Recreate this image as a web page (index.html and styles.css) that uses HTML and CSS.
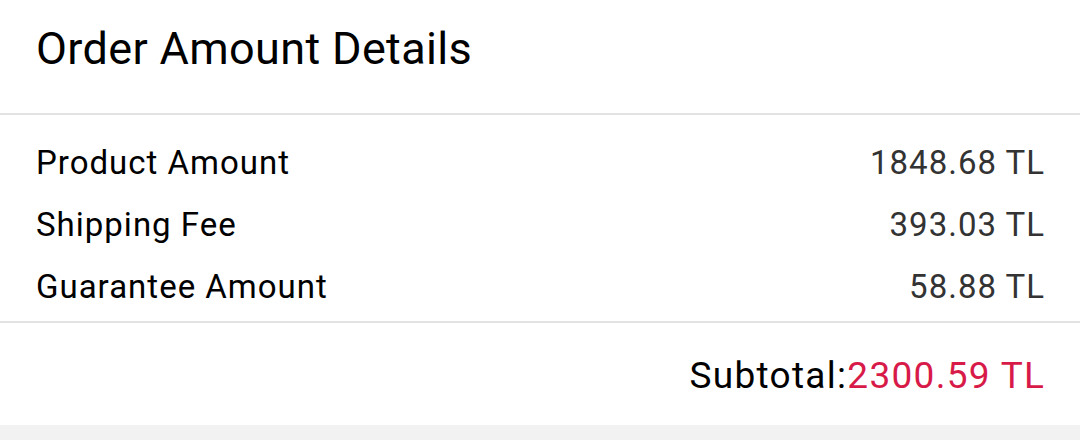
FILE: index.html
```html
<!DOCTYPE html>
<html lang="en">
<head>
  <meta charset="UTF-8">
  <meta name="viewport" content="width=device-width, initial-scale=1.0">
  <title>Order Amount Details</title>
  <link rel="stylesheet" href="styles.css">
</head>
<body>
  <div class="order-card">
    <div class="order-header">
      <h1>Order Amount Details</h1>
    </div>

    <div class="order-lines">
      <div class="line">
        <span class="line-label">Product Amount</span>
        <span class="line-value">1848.68 TL</span>
      </div>
      <div class="line">
        <span class="line-label">Shipping Fee</span>
        <span class="line-value">393.03 TL</span>
      </div>
      <div class="line">
        <span class="line-label">Guarantee Amount</span>
        <span class="line-value">58.88 TL</span>
      </div>
    </div>

    <div class="order-total">
      <span class="total-label">Subtotal:</span><span class="total-value">2300.59 TL</span>
    </div>
  </div>
</body>
</html>
```

FILE: styles.css
```css
body {
  font-family: Roboto, "Noto Sans", Arial, sans-serif;
  background-color: #f2f2f2;
  margin: 0;
}

.order-card {
  background-color: #ffffff;
  height: 425px;
}

.order-header {
  height: 91px;
  padding: 22px 36px 0;
  border-bottom: 2px solid #e3e3e3;
}

.order-header h1 {
  margin: 0;
  font-size: 45px;
  font-weight: 400;
  letter-spacing: 0.35px;
  color: #000000;
}

.order-lines {
  padding: 17px 36px 3px;
  border-bottom: 2px solid #e3e3e3;
}

.line {
  display: flex;
  justify-content: space-between;
  line-height: 62px;
  font-size: 33px;
  letter-spacing: 1px;
}

.line-label {
  color: #000000;
}

.line-value {
  color: #333333;
  margin-right: -1px;
}

.order-total {
  display: flex;
  justify-content: flex-end;
  padding: 31px 36px 0;
  font-size: 37px;
  letter-spacing: 1.3px;
}

.total-label {
  color: #000000;
}

.total-value {
  color: #d81a48;
  margin-right: -1.3px;
}
```
